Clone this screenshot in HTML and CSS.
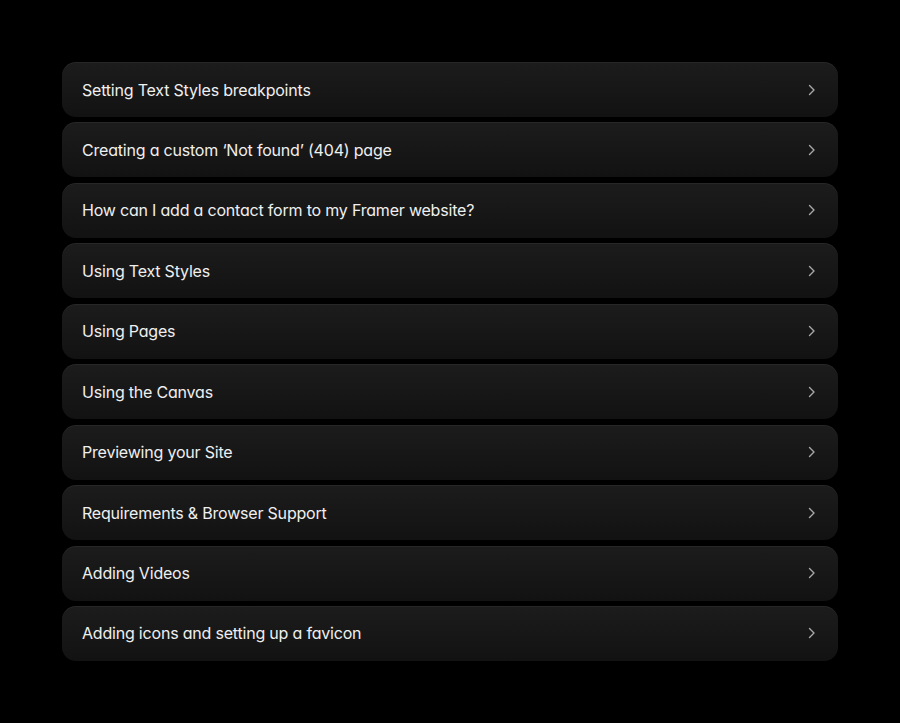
FILE: index.html
```html
<!DOCTYPE html>
<html lang="en">
<head>
    <meta charset="UTF-8">
    <meta name="viewport" content="width=device-width, initial-scale=1.0">
    <title>Help Articles</title>
    <link rel="stylesheet" href="styles.css">
</head>
<body>
    <div class="list">
        <a class="item" href="#"><span>Setting Text Styles breakpoints</span><svg class="chevron" viewBox="0 0 8 12"><path d="M1.5 1.5L6 6l-4.5 4.5"/></svg></a>
        <a class="item" href="#"><span>Creating a custom ‘Not found’ (404) page</span><svg class="chevron" viewBox="0 0 8 12"><path d="M1.5 1.5L6 6l-4.5 4.5"/></svg></a>
        <a class="item" href="#"><span>How can I add a contact form to my Framer website?</span><svg class="chevron" viewBox="0 0 8 12"><path d="M1.5 1.5L6 6l-4.5 4.5"/></svg></a>
        <a class="item" href="#"><span>Using Text Styles</span><svg class="chevron" viewBox="0 0 8 12"><path d="M1.5 1.5L6 6l-4.5 4.5"/></svg></a>
        <a class="item" href="#"><span>Using Pages</span><svg class="chevron" viewBox="0 0 8 12"><path d="M1.5 1.5L6 6l-4.5 4.5"/></svg></a>
        <a class="item" href="#"><span>Using the Canvas</span><svg class="chevron" viewBox="0 0 8 12"><path d="M1.5 1.5L6 6l-4.5 4.5"/></svg></a>
        <a class="item" href="#"><span>Previewing your Site</span><svg class="chevron" viewBox="0 0 8 12"><path d="M1.5 1.5L6 6l-4.5 4.5"/></svg></a>
        <a class="item" href="#"><span>Requirements &amp; Browser Support</span><svg class="chevron" viewBox="0 0 8 12"><path d="M1.5 1.5L6 6l-4.5 4.5"/></svg></a>
        <a class="item" href="#"><span>Adding Videos</span><svg class="chevron" viewBox="0 0 8 12"><path d="M1.5 1.5L6 6l-4.5 4.5"/></svg></a>
        <a class="item" href="#"><span>Adding icons and setting up a favicon</span><svg class="chevron" viewBox="0 0 8 12"><path d="M1.5 1.5L6 6l-4.5 4.5"/></svg></a>
    </div>
</body>
</html>
```

FILE: styles.css
```css
body {
    margin: 0;
    background-color: #000;
    font-family: Inter, "Noto Sans", sans-serif;
    font-feature-settings: "cv11";
    padding: 62px 62px;
}
.list {
    display: flex;
    flex-direction: column;
    gap: 5.45px;
}
.item {
    display: flex;
    align-items: center;
    justify-content: space-between;
    box-sizing: border-box;
    height: 55px;
    padding: 0 22px 0 20px;
    border-radius: 14px;
    background: linear-gradient(180deg, #1c1c1c 0%, #121212 100%);
    box-shadow: inset 0 1px 0 rgba(255,255,255,0.05);
    color: #efefef;
    font-size: 16px;
    letter-spacing: -0.2px;
    text-decoration: none;
}
.chevron {
    width: 8px;
    height: 12px;
    fill: none;
    stroke: #a8a8a8;
    stroke-width: 1.4;
    stroke-linecap: round;
    stroke-linejoin: round;
}
```
